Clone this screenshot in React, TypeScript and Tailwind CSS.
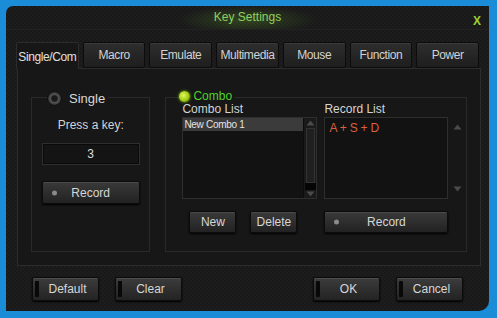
import React from "react";

const tabs = ["Single/Com", "Macro", "Emulate", "Multimedia", "Mouse", "Function", "Power"];

function Button({
  label,
  className = "",
  dot = false,
}: {
  label: string;
  className?: string;
  dot?: boolean;
}) {
  return (
    <div
      className={`relative flex items-center justify-center rounded-[2px] border border-[#0c0c0c] bg-gradient-to-b from-[#3a3a3a] to-[#222222] text-[12px] text-[#d6d6d6] shadow-[inset_0_1px_0_#4a4a4a,0_1px_2px_#000] ${className}`}
    >
      {dot && (
        <span className="absolute left-[9px] top-1/2 h-[5px] w-[5px] -translate-y-1/2 rounded-full bg-[#8a8a8a]" />
      )}
      {label}
    </div>
  );
}

function FooterButton({ label }: { label: string }) {
  return (
    <div className="relative flex h-[24px] w-[67px] items-center justify-center rounded-[2px] border border-[#0c0c0c] bg-gradient-to-b from-[#3c3c3c] to-[#232323] pl-[4px] text-[12px] text-[#d6d6d6] shadow-[inset_0_1px_0_#4c4c4c,0_1px_2px_#000]">
      {/* dark notch at the left edge */}
      <span className="absolute left-[2px] top-[3px] bottom-[3px] w-[4px] rounded-[1px] bg-[#080808]" />
      {label}
    </div>
  );
}

function Arrow({ up }: { up?: boolean }) {
  return (
    <svg width="9" height="6" viewBox="0 0 9 6">
      <path d={up ? "M0.5 5.5 L4.5 0.5 L8.5 5.5 Z" : "M0.5 0.5 L4.5 5.5 L8.5 0.5 Z"} fill="#4a4a4a" />
    </svg>
  );
}

export default function App() {
  return (
    <div className="h-[318px] w-[497px] bg-[#1b8cd8] pl-[6px] pt-[6px] font-['Liberation_Sans',Arial,sans-serif]">
      <div className="flex h-[305px] w-[483px] flex-col overflow-hidden rounded-tl-[7px] rounded-br-[10px] bg-[#1b1b1b] bg-[repeating-conic-gradient(#1d1d1d_0_25%,#191919_0_50%)] bg-[length:4px_4px]">
        {/* Title bar */}
        <div className="relative flex h-[24px] items-center justify-center border-b border-[#222] bg-[radial-gradient(ellipse_70px_14px_at_50%_60%,rgba(90,150,40,0.35),transparent)]">
          <span className="mt-[-1px] text-[12px] text-[#8fcf5f]">Key Settings</span>
          <span className="absolute right-[8px] top-[6px] text-[12px] font-bold text-[#9ccf2e]">X</span>
        </div>

        {/* Tabs */}
        <div className="mt-[12px] flex items-end gap-[4px] px-[10px]">
          {tabs.map((t, i) =>
            i === 0 ? (
              <div
                key={t}
                className="relative z-10 mb-[-1px] flex h-[27px] w-[63px] items-start justify-center rounded-t-[2px] border border-b-0 border-[#2c2c2c] bg-[#171717] pt-[5px] text-[12px] tracking-[-0.4px] text-[#e0e0e0]"
              >
                {t}
              </div>
            ) : (
              <div
                key={t}
                className="flex h-[26px] w-[63px] items-center justify-center rounded-[2px] border border-[#0c0c0c] bg-gradient-to-b from-[#2e2e2e] to-[#1e1e1e] text-[12px] tracking-[-0.4px] text-[#d2d2d2] shadow-[inset_0_1px_0_#3a3a3a]"
              >
                {t}
              </div>
            )
          )}
        </div>

        {/* Panel */}
        <div className="ml-[11px] flex h-[198px] w-[464px] gap-[15px] border border-[#2c2c2c] bg-[#171717] px-[13px] pb-[13px] pt-[28px]">
          {/* Single group */}
          <div className="relative flex w-[120px] flex-col items-center border border-[#2a2a2a]">
            <div className="absolute -top-[9px] left-[15px] flex items-center gap-[7px] bg-[#171717] pr-[3px]">
              <span className="h-[15px] w-[15px] rounded-full border border-[#111] bg-[radial-gradient(circle,#1a1a1a_30%,#555_45%,#2a2a2a_75%)]" />
              <span className="text-[13px] text-[#d8d8d8]">Single</span>
            </div>
            <div className="mt-[18px] text-[12px] text-[#d4d4d4]">Press a key:</div>
            <div className="mt-[9px] flex h-[22px] w-[98px] items-center justify-center border border-[#2e2e2e] bg-[#141414] text-[12px] text-[#dcdcdc] shadow-[inset_0_0_0_1px_#0a0a0a]">
              3
            </div>
            <Button label="Record" dot className="mt-[16px] h-[23px] w-[98px]" />
          </div>

          {/* Combo group */}
          <div className="relative flex w-[303px] border border-[#2a2a2a] pl-[16px] pt-[5px]">
            <div className="absolute -top-[8px] left-[13px] flex items-center gap-[3px] bg-[#171717] pr-[3px]">
              <span className="h-[11px] w-[11px] rounded-full bg-[radial-gradient(circle_at_40%_40%,#e4f75a,#9ccc14_55%,#3c5a08)] shadow-[0_0_3px_#7fbf10]" />
              <span className="text-[12px] leading-[12px] text-[#4fd12c]">Combo</span>
            </div>

            {/* Combo list column */}
            <div className="flex w-[135px] flex-col">
              <div className="h-[14px] text-[12px] leading-[12px] text-[#d4d4d4]">Combo List</div>
              <div className="flex h-[82px] border border-[#2e2e2e] bg-[#121212]">
                <div className="flex-1">
                  <div className="h-[13px] bg-[#3b3b3b] pl-[1px] text-[10px] leading-[13px] tracking-[-0.3px] text-[#e4e4e4]">
                    New Combo 1
                  </div>
                </div>
                <div className="flex w-[13px] flex-col items-center border-l border-[#0c0c0c] bg-[#1a1a1a]">
                  <div className="flex h-[10px] items-center">
                    <Arrow up />
                  </div>
                  <div className="w-[9px] flex-1 border border-[#333] bg-[#202020]" />
                  <div className="h-[7px] w-[11px] bg-[#050505]" />
                  <div className="flex h-[8px] items-center">
                    <Arrow />
                  </div>
                </div>
              </div>
              <div className="mt-[12px] flex gap-[14px] pl-[7px]">
                <Button label="New" className="h-[22px] w-[47px]" />
                <Button label="Delete" className="h-[22px] w-[47px]" />
              </div>
            </div>

            {/* Record list column */}
            <div className="ml-[7px] flex flex-col">
              <div className="h-[14px] text-[12px] leading-[12px] text-[#d4d4d4]">Record List</div>
              <div className="flex">
                <div className="h-[82px] w-[124px] border border-[#2e2e2e] bg-[#121212] pl-[4px] pt-[1px] text-[12px] tracking-[-0.2px] text-[#d9603a]">
                  A + S + D
                </div>
                <div className="ml-[4px] flex h-[82px] w-[10px] flex-col items-center justify-between py-[7px]">
                  <Arrow up />
                  <Arrow />
                </div>
              </div>
              <Button label="Record" dot className="mt-[12px] h-[22px] w-[124px]" />
            </div>
          </div>
        </div>

        {/* Footer */}
        <div className="mt-[11px] flex items-center px-[26px]">
          <div className="flex gap-[16px]">
            <FooterButton label="Default" />
            <FooterButton label="Clear" />
          </div>
          <div className="ml-auto flex gap-[16px]">
            <FooterButton label="OK" />
            <FooterButton label="Cancel" />
          </div>
        </div>
      </div>
    </div>
  );
}
